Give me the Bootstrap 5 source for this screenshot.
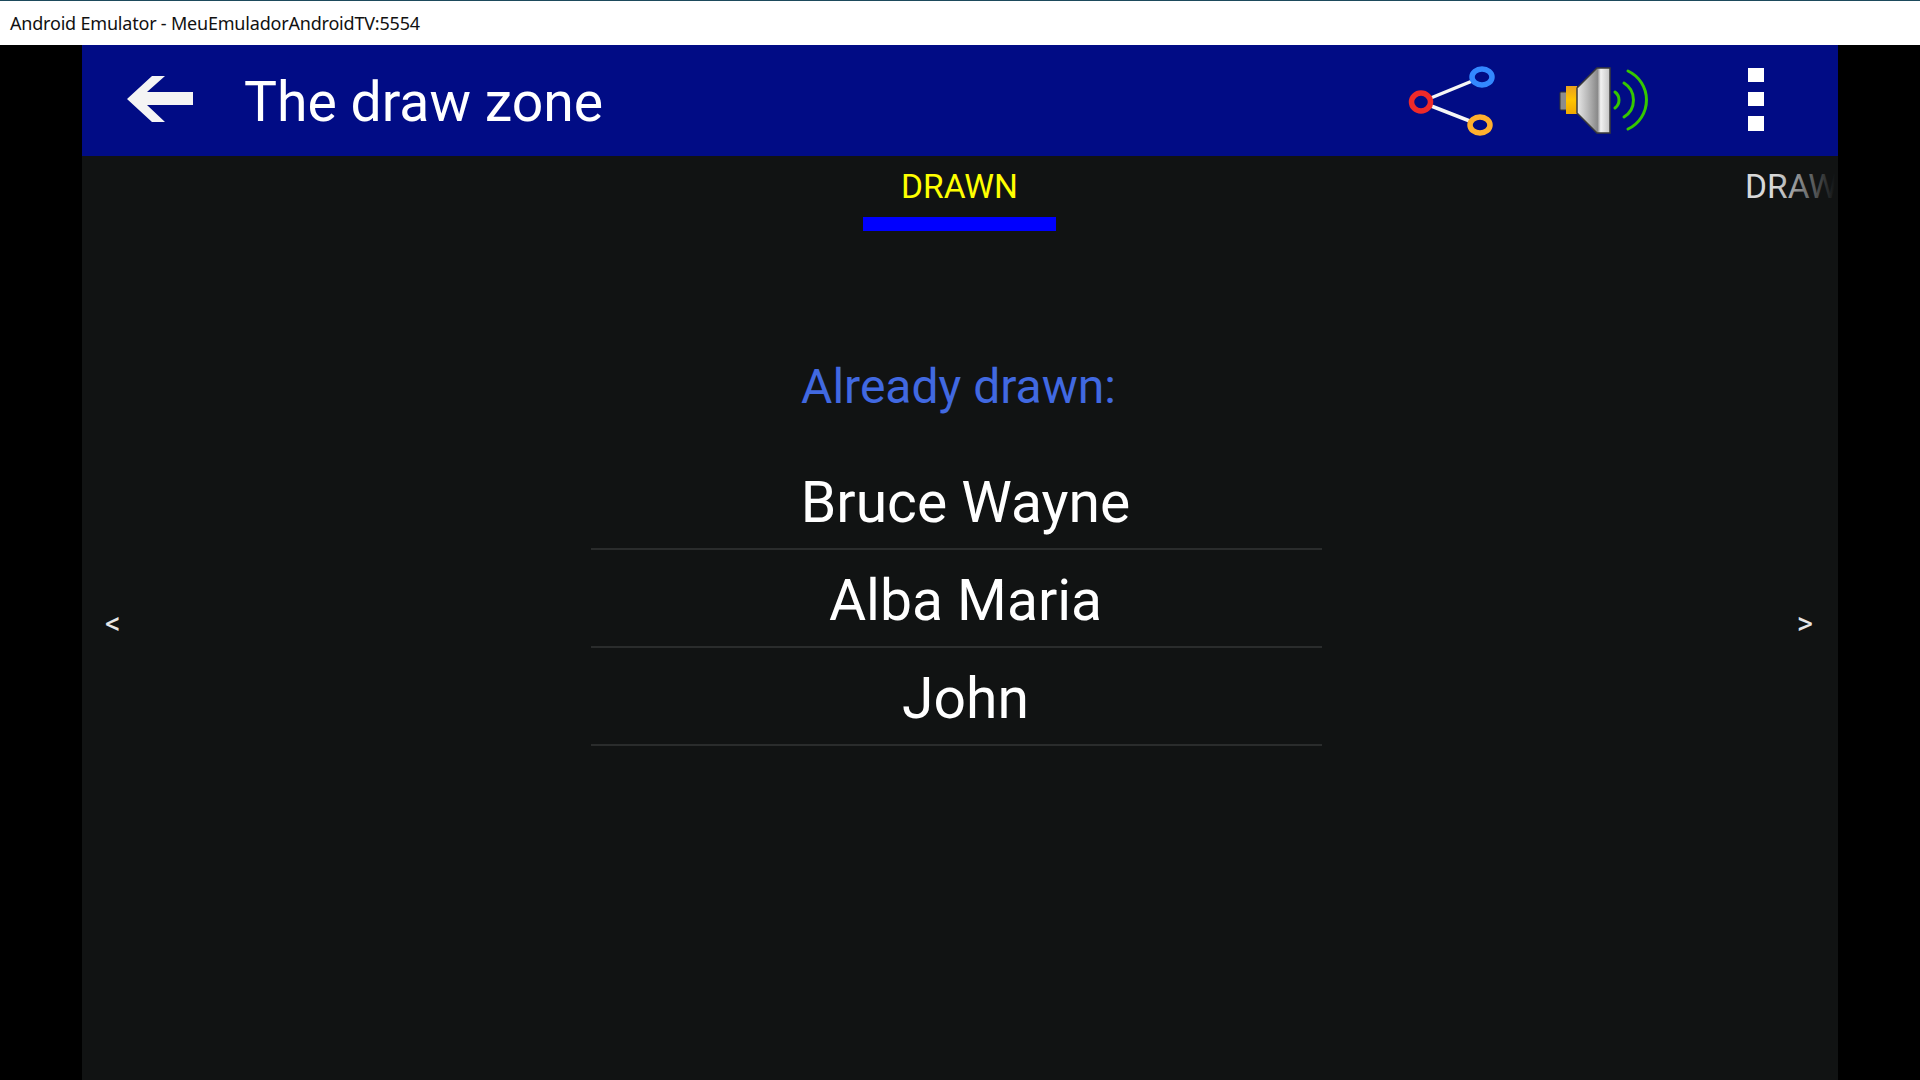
<!DOCTYPE html>
<html lang="en">
<head>
    <meta charset="UTF-8">
    <meta name="viewport" content="width=device-width, initial-scale=1.0">
    <title>Android Emulator - MeuEmuladorAndroidTV:5554</title>
    <link href="https://cdn.jsdelivr.net/npm/bootstrap@5.3.3/dist/css/bootstrap.min.css" rel="stylesheet">
    <style>
        html, body { height: 100%; }
        body { background: #000; font-family: Roboto, "Liberation Sans", sans-serif; overflow: hidden; }
        .win-title { height: 45px; background: #fff; border-top: 1px solid #1d4a5c; padding-left: 10px; font: 18px/45px "Noto Sans", sans-serif; color: #111; letter-spacing: -.2px; }
        .app-frame { width: 1756px; margin-left: 82px; height: 1035px; background: #111313; }
        .app-bar { height: 111px; background: #010c85; color: #fff; }
        .back-btn { margin: -3px 0 0 45px; width: 66px; height: 46px; flex: none; }
        .app-title { margin: 3px 0 0 51px; font-size: 55.3px; line-height: 105px; }
        .bar-icons { margin-left: auto; margin-right: 44px; }
        .tab-strip { height: 75px; overflow: hidden; white-space: nowrap; font-size: 33.5px; }
        .tab-on { margin-left: 781px; width: 193px; height: 75px; flex: none; padding-top: 8px; line-height: 45px; color: #ffff00; text-align: center; border-bottom: 14px solid #0000ff; }
        .tab-off { margin-left: 689px; padding-top: 8px; line-height: 45px; color: #d8d8d8; }
        .tab-fade { right: 0; top: 0; width: 62px; height: 75px; background: linear-gradient(to right, rgba(17,19,19,0), #111313 95%); }
        .pager { height: 849px; }
        .drawn-head { padding-top: 121px; font-size: 48px; line-height: 70px; color: #4169e1; text-align: center; margin-left: -3px; }
        .drawn-list { width: 731px; margin: 30px 0 0 509px; }
        .drawn-row { height: 98px; background: transparent; color: #fff; border: 0; border-bottom: 2px solid #2a2c2c; border-radius: 0 !important; padding: 0 0 0 18px; font-size: 57px; line-height: 101px; text-align: center; }
        .pager-arrow { top: 378px; font-size: 31px; line-height: 30px; color: #e6e6e6; }
        .arrow-prev { left: 23px; }
        .arrow-next { right: 25px; }
    </style>
</head>
<body>
<div class="win-title">Android Emulator - MeuEmuladorAndroidTV:5554</div>

<div class="app-frame">
    <div class="app-bar d-flex align-items-center">
        <svg class="back-btn" viewBox="127 76 66 46" aria-hidden="true">
            <path fill="#f4f4f4" d="M127 99 L152 76 L165 76 L147 92 L193 92 L193 105 L147 105 L165 122 L152 122 Z"/>
        </svg>
        <div class="app-title">The draw zone</div>
        <svg class="bar-icons" width="394" height="111" viewBox="1400 45 394 111" aria-hidden="true">
            <defs>
                <linearGradient id="cone" x1="0" x2="1" y1="0" y2="0">
                    <stop offset="0" stop-color="#e8e8e8"/>
                    <stop offset=".35" stop-color="#b5b5b5"/>
                    <stop offset=".62" stop-color="#8a8a8a"/>
                    <stop offset=".72" stop-color="#f2f2f2"/>
                    <stop offset="1" stop-color="#c4c4c4"/>
                </linearGradient>
                <linearGradient id="amber" x1="0" x2="0" y1="0" y2="1">
                    <stop offset="0" stop-color="#e8a020"/>
                    <stop offset=".5" stop-color="#ffc400"/>
                    <stop offset="1" stop-color="#f0a800"/>
                </linearGradient>
            </defs>
            <g fill="none">
                <path stroke="#f6f6f6" stroke-width="3.5" d="M1421 102 L1482 77 M1421 102 L1480 125"/>
                <ellipse cx="1421" cy="102" rx="9.5" ry="9" stroke="#ee2a2a" stroke-width="5.5" fill="#010c85"/>
                <ellipse cx="1482" cy="77" rx="10" ry="8" stroke="#3388ff" stroke-width="5.5" fill="#010c85"/>
                <ellipse cx="1480" cy="125" rx="10" ry="8" stroke="#ffb02e" stroke-width="5.5" fill="#010c85"/>
            </g>
            <rect x="1560" y="92" width="7" height="18" rx="1" fill="#8c8c8c" stroke="#333" stroke-width="1"/>
            <rect x="1566" y="86" width="11" height="28" fill="url(#amber)"/>
            <path fill="url(#cone)" stroke="#3a3a3a" stroke-width="1.5" d="M1577 88 L1597 68 L1610 68 L1610 133 L1597 133 L1577 113 Z"/>
            <g fill="none" stroke="#35c800" stroke-width="3" stroke-linecap="round">
                <path d="M1615 92 A10 10 0 0 1 1615 108"/>
                <path d="M1624 83 A20 20 0 0 1 1624 117"/>
                <path d="M1628 71 A32 32 0 0 1 1628 129"/>
            </g>
            <rect x="1748" y="68" width="16" height="14" fill="#fff"/>
            <rect x="1748" y="92" width="16" height="14" fill="#fff"/>
            <rect x="1748" y="116" width="16" height="15" fill="#fff"/>
        </svg>
    </div>

    <div class="tab-strip d-flex position-relative">
        <div class="tab-on">DRAWN</div>
        <div class="tab-off">DRAW</div>
        <div class="tab-fade position-absolute"></div>
    </div>

    <div class="pager position-relative">
        <div class="drawn-head">Already drawn:</div>
        <ul class="list-group drawn-list">
            <li class="list-group-item drawn-row">Bruce Wayne</li>
            <li class="list-group-item drawn-row">Alba Maria</li>
            <li class="list-group-item drawn-row">John</li>
        </ul>
        <div class="pager-arrow arrow-prev position-absolute">&lt;</div>
        <div class="pager-arrow arrow-next position-absolute">&gt;</div>
    </div>
</div>

<script src="https://cdn.jsdelivr.net/npm/bootstrap@5.3.3/dist/js/bootstrap.bundle.min.js"></script>
</body>
</html>
